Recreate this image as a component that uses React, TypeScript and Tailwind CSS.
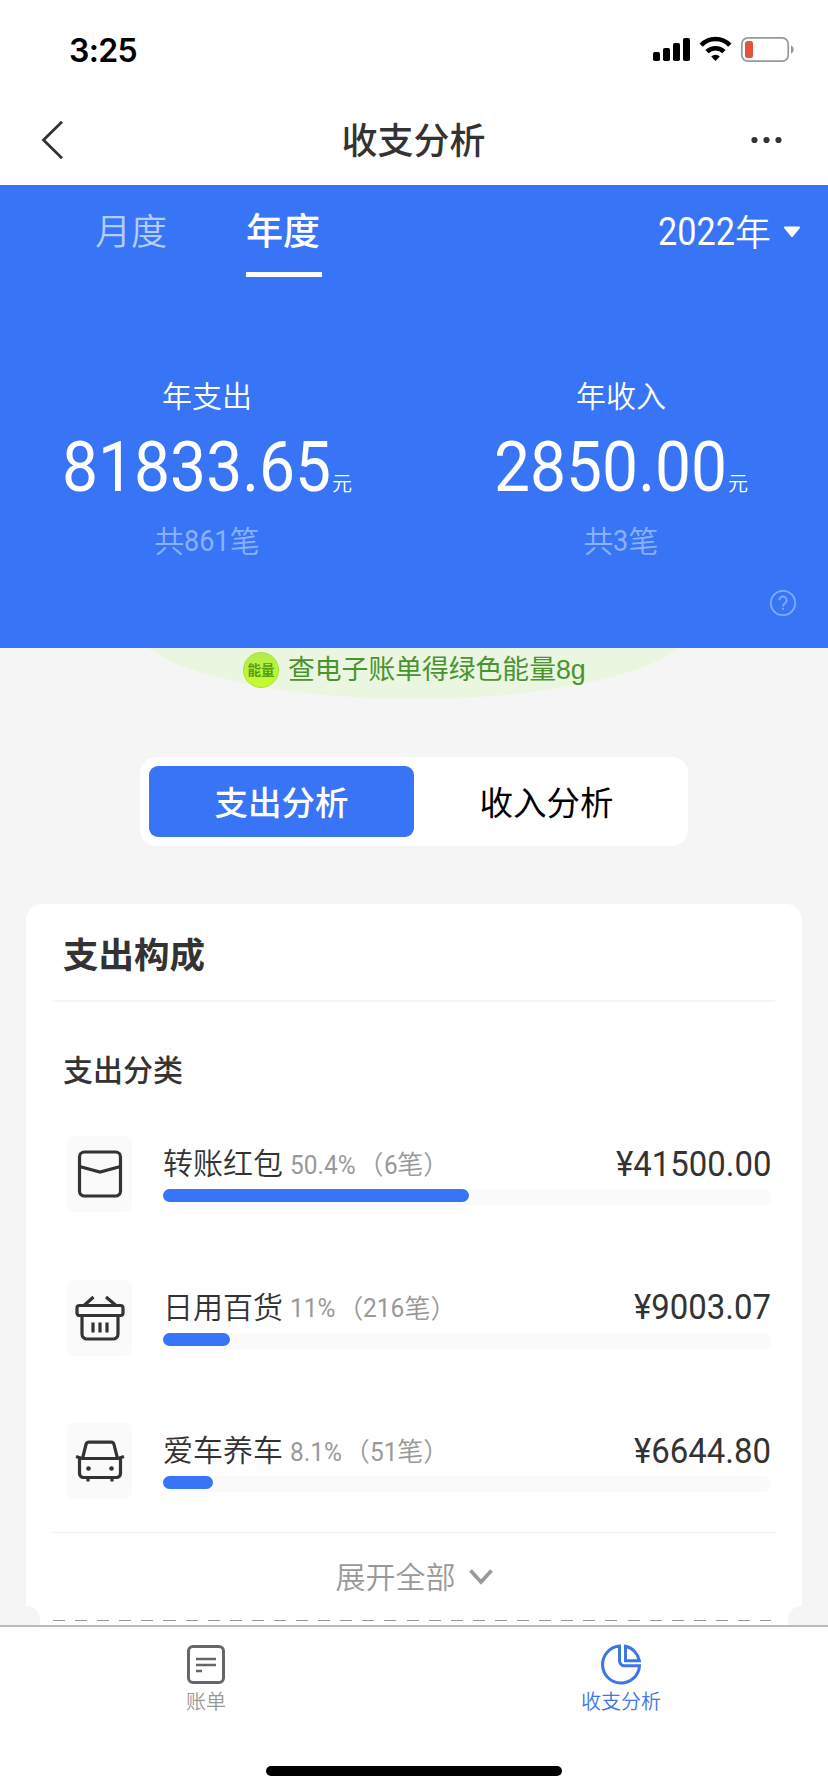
import type { ReactNode } from "react";

interface Category {
  name: string;
  percent: string;
  count: string;
  amount: string;
  barWidth: number;
  icon: ReactNode;
}

const CATEGORIES: Category[] = [
  {
    name: "转账红包",
    percent: "50.4%",
    count: "6",
    amount: "¥41500.00",
    barWidth: 306,
    icon: <EnvelopeIcon />,
  },
  {
    name: "日用百货",
    percent: "11%",
    count: "216",
    amount: "¥9003.07",
    barWidth: 67,
    icon: <BasketIcon />,
  },
  {
    name: "爱车养车",
    percent: "8.1%",
    count: "51",
    amount: "¥6644.80",
    barWidth: 50,
    icon: <CarIcon />,
  },
];

// Roboto advance widths in em
const ADVANCE: Record<string, number> = { ".": 0.263, "%": 0.733, "¥": 0.525 };
const DIGIT_ADVANCE = 0.5615;

// Numbers are set slightly condensed, the box takes the condensed width.
function Digits({
  value,
  scale = 0.94,
  className = "",
}: {
  value: string;
  scale?: number;
  className?: string;
}) {
  const em = [...value].reduce((sum, c) => sum + (ADVANCE[c] ?? DIGIT_ADVANCE), 0);
  return (
    <span
      className={`inline-block font-[Roboto,sans-serif] font-normal whitespace-nowrap ${className}`}
      style={{ width: `${em * scale}em` }}
    >
      <span
        className="inline-block origin-left"
        style={{ transform: `scaleX(${scale})` }}
      >
        {value}
      </span>
    </span>
  );
}

export default function App() {
  return (
    <div className="flex h-[1792px] w-[828px] flex-col overflow-hidden bg-[#f5f5f5] font-['Noto_Sans_CJK_SC',sans-serif] font-[350] text-[#333]">
      <StatusBar />
      <NavBar />
      <Summary />
      <main className="flex min-h-0 flex-1 flex-col overflow-hidden">
        <EnergyBanner />
        <div className="mx-auto mt-[58px] flex h-[89px] w-[548px] shrink-0 rounded-[16px] bg-white px-[9px] py-[9px] text-[33.5px]">
          <div className="flex w-[265px] items-center justify-center rounded-[9px] bg-[#3875f6] font-medium text-white">
            支出分析
          </div>
          <div className="flex flex-1 items-center justify-center font-normal text-black">
            收入分析
          </div>
        </div>
        <ExpenseCard />
      </main>
      <TabBar />
    </div>
  );
}

function StatusBar() {
  return (
    <div className="flex h-[95px] shrink-0 items-center justify-between bg-white pt-[4px] pr-[33px] pl-[69px]">
      <span className="pt-[2px] font-[Inter,sans-serif] text-[32px] leading-none font-semibold tracking-[-0.7px] text-black">
        3:25
      </span>
      <svg width="142" height="27" viewBox="653 36 142 27">
        <rect x="653" y="52" width="7" height="9" rx="1.8" />
        <rect x="663" y="48" width="7" height="13" rx="1.8" />
        <rect x="673" y="43" width="7" height="18" rx="1.8" />
        <rect x="683" y="38" width="7" height="23" rx="1.8" />
        <g fill="none" stroke="#000" strokeWidth="4.6">
          <path d="M701.2 45.2a19.6 19.6 0 0 1 28.6 0" />
          <path d="M707 51.6a12.3 12.3 0 0 1 17 0" />
        </g>
        <path d="M715.5 61l-4.3-4.4a6.2 6.2 0 0 1 8.6 0z" />
        <rect
          x="741.8"
          y="37.8"
          width="46.4"
          height="23.4"
          rx="6"
          fill="none"
          stroke="#999"
          strokeWidth="1.7"
        />
        <rect x="745" y="41" width="8" height="17" rx="2.5" fill="#e74f3d" />
        <path d="M791 45.3a4.6 4.6 0 0 1 0 8.4z" fill="#999" />
      </svg>
    </div>
  );
}

function NavBar() {
  return (
    <header className="flex h-[90px] shrink-0 items-center justify-between bg-white pr-[46px] pl-[40px]">
      <svg width="36" height="38" viewBox="0 0 36 38" fill="none">
        <path d="M22 .8L3.500 19l18.500 18.200" stroke="#333" strokeWidth="2.8" />
      </svg>
      <h1 className="pb-[4px] text-[36px] font-medium">收支分析</h1>
      <svg width="31" height="8" viewBox="0 0 31 8" fill="#333">
        <circle cx="3.500" cy="4" r="3.1" />
        <circle cx="15.500" cy="4" r="3.1" />
        <circle cx="27.500" cy="4" r="3.1" />
      </svg>
    </header>
  );
}

function Summary() {
  return (
    <section className="flex h-[463px] shrink-0 flex-col bg-[#3875f6] text-white">
      <div className="flex h-[92px] justify-between pr-[27px] pl-[95px]">
        <div className="flex">
          <span className="flex h-[87px] items-center text-[36px] text-[#b3ccfc]">
            月度
          </span>
          <div className="ml-[79px] flex w-[76px] flex-col border-b-[5px] border-white">
            <span className="flex h-[87px] items-center pt-[2px] text-[37px] leading-none font-medium">
              年度
            </span>
          </div>
        </div>
        <div className="flex h-[92px] items-center">
          <Digits value="2022" scale={0.9} className="pt-[3px] text-[38px]" />
          <span className="pb-[3px] text-[36px]">年</span>
          <svg className="mt-px ml-[12px]" width="18" height="12" viewBox="0 0 18 12">
            <path
              d="M2 1.500h14L9 10z"
              fill="#fff"
              stroke="#fff"
              strokeWidth="2"
              strokeLinejoin="round"
            />
          </svg>
        </div>
      </div>

      <div className="mt-[92px] grid grid-cols-2">
        <SummaryItem label="年支出" value="81833.65" count="861" />
        <SummaryItem label="年收入" value="2850.00" count="3" />
      </div>

      <svg
        className="mt-auto mr-[31px] mb-[31px] self-end"
        width="28"
        height="28"
        viewBox="0 0 28 28"
        fill="none"
        stroke="#83abfa"
        strokeWidth="1.800"
      >
        <circle cx="14" cy="14" r="12.2" />
        <path d="M10.300 11.300a3.700 3.700 0 1 1 5.800 3c-1.500 1-2.100 1.600-2.100 3.200" />
        <circle cx="14" cy="19.800" r="1.100" fill="#83abfa" stroke="none" />
      </svg>
    </section>
  );
}

function SummaryItem({
  label,
  value,
  count,
}: {
  label: string;
  value: string;
  count: string;
}) {
  return (
    <div className="flex flex-col items-center">
      <span className="flex h-[50px] items-center text-[30px]">{label}</span>
      <div className="mt-[3px] flex h-[90px] items-baseline justify-center">
        <Digits
          value={value}
          scale={0.916}
          className="text-[70px] leading-[90px]"
        />
        <span className="ml-px text-[20px] leading-none">元</span>
      </div>
      <span className="mt-[2px] flex h-[50px] items-center text-[30px] text-[#8bb0fb]">
        共
        <Digits value={count} scale={0.9} className="pt-[3px]" />
        笔
      </span>
    </div>
  );
}

function EnergyBanner() {
  return (
    <div className="relative h-[51px] shrink-0 overflow-hidden">
      <div className="absolute bottom-0 left-[134px] h-[150px] w-[560px] rounded-[50%] bg-[#ebf6e0]" />
      <div className="relative flex h-[43px] items-center pl-[243px]">
        <span className="flex h-[36px] w-[36px] items-center justify-center rounded-full border border-[#a4e52c] bg-linear-to-b from-[#b0ec4a] to-[#c9fa2b] text-[13.500px] leading-none font-bold text-[#55a012]">
          能量
        </span>
        <span className="ml-[9px] pt-[2px] font-['Liberation_Sans','Noto_Sans_CJK_SC',sans-serif] text-[26.800px] font-normal text-[#4a9430]">
          查电子账单得绿色能量8g
        </span>
      </div>
    </div>
  );
}

function ExpenseCard() {
  return (
    <section className="relative mx-[26px] mt-[58px] shrink-0 rounded-t-[16px] bg-white">
      <h2 className="flex h-[96px] items-center pt-px pl-[37px] text-[35.500px] font-bold">
        支出构成
      </h2>
      <div className="mx-[27px] h-[2px] bg-[#f5f5f5]" />
      <h3 className="flex h-[134px] items-center pb-[2px] pl-[37px] text-[30px] font-medium">
        支出分类
      </h3>

      <div className="flex flex-col gap-[67.500px] pr-[31px] pl-[41px]">
        {CATEGORIES.map((category) => (
          <CategoryRow key={category.name} category={category} />
        ))}
      </div>

      <div className="mx-[27px] mt-[33px] h-px bg-[#eee]" />
      <div className="flex h-[87px] items-center justify-center pb-[2px] text-[30px] text-[#999]">
        展开全部
        <svg
          className="mt-[2px] ml-[13px]"
          width="24"
          height="18"
          viewBox="0 0 24 18"
          fill="none"
        >
          <path d="M1.500 2.500L12 14 22.500 2.500" stroke="#999" strokeWidth="3.600" />
        </svg>
      </div>

      {/* ticket-style tear line with a notch on each side */}
      <div className="mx-[27px] h-[20px]">
        <div className="h-px w-[718px] bg-[repeating-linear-gradient(to_right,#999_0,#999_12px,transparent_12px,transparent_22.100px)]" />
      </div>
      <div className="absolute bottom-[7px] -left-[13px] h-[27px] w-[27px] rounded-full bg-[#f5f5f5]" />
      <div className="absolute -right-[13px] bottom-[7px] h-[27px] w-[27px] rounded-full bg-[#f5f5f5]" />
    </section>
  );
}

function CategoryRow({ category }: { category: Category }) {
  return (
    <div className="flex h-[76px] gap-[31px]">
      <div className="flex w-[65px] items-center justify-center rounded-[7px] bg-[#fafafa]">
        {category.icon}
      </div>
      <div className="flex-1">
        <div className="flex h-[53px] items-center">
          <span className="pb-[2px] text-[30px]">{category.name}</span>
          <span className="ml-[7px] flex items-center text-[26px] text-[#999]">
            <Digits value={category.percent} className="pt-[5px]" />
            <span className="ml-[2px]">（</span>
            <Digits value={category.count} className="pt-[5px]" />笔）
          </span>
          <Digits
            value={category.amount}
            scale={0.94}
            className="ml-auto pt-[5px] text-[35px]"
          />
        </div>
        <div className="h-[16px] rounded-[7px] bg-[#fafafa]">
          <div
            className="h-[13px] rounded-full bg-[#3875f6]"
            style={{ width: category.barWidth }}
          />
        </div>
      </div>
    </div>
  );
}

function TabBar() {
  return (
    <footer className="flex h-[167px] shrink-0 flex-col justify-between border-t-2 border-[#bbb] bg-white">
      <nav className="grid grid-cols-2 text-[20px]">
        <div className="flex flex-col items-center pt-[17px] pr-[2px] text-[#999]">
          <svg width="40" height="42" viewBox="0 0 40 42" fill="none" stroke="#666">
            <rect x="2.500" y="2.500" width="35" height="36" rx="4.500" strokeWidth="3" />
            <path d="M10 15h20M10 21h20M10 27h6" strokeWidth="2.600" />
          </svg>
          <span className="leading-[30px]">账单</span>
        </div>
        <div className="flex flex-col items-center pt-[17px] text-[#3d76e8]">
          <svg width="40" height="42" viewBox="0 0 40 42" fill="none" stroke="#3d76e8" strokeWidth="3">
            <path d="M18.500 2.100A18.500 18.500 0 1 0 38.500 21.800H23.500a5 5 0 0 1-5-5z" />
            <path d="M24.500 2.300V16.700H38.400A18.300 18.300 0 0 0 24.500 2.300z" />
          </svg>
          <span className="leading-[30px]">收支分析</span>
        </div>
      </nav>
      <div className="mx-auto mb-[16px] h-[10px] w-[296px] rounded-full bg-black" />
    </footer>
  );
}

function EnvelopeIcon() {
  return (
    <svg width="50" height="50" viewBox="0 0 50 50" fill="none" stroke="#333" strokeWidth="3.200">
      <rect x="4.500" y="3" width="41" height="44" rx="5" />
      <path d="M4.500 17.500L25 23 45.500 17.500" />
    </svg>
  );
}

function BasketIcon() {
  return (
    <svg width="50" height="50" viewBox="0 0 50 50" fill="none" stroke="#333" strokeWidth="3.200">
      <path d="M9 12.500L18.500 4M41 12.500L31 4" />
      <rect x="2" y="12.500" width="46" height="10" rx="2.500" />
      <path d="M7 22.500V41a5 5 0 0 0 5 5H38a5 5 0 0 0 5-5V22.500" />
      <path d="M18 29.500v10M25 29.500v10M32 29.500v10" />
    </svg>
  );
}

function CarIcon() {
  return (
    <svg width="50" height="50" viewBox="0 0 50 50" fill="none" stroke="#333" strokeWidth="3.200">
      <path d="M7.500 22.500L11 8.500a3 3 0 0 1 3-2.300H36a3 3 0 0 1 3 2.300l3.500 14" />
      <path d="M1 20.500L7 22.500H43l6-2" />
      <path d="M4.500 21.500V37.500a4 4 0 0 0 4 4H41.500a4 4 0 0 0 4-4V21.500" />
      <path d="M13 41.500v4M37 41.500v4" />
      <circle cx="13.500" cy="32.500" r="2.300" fill="#333" stroke="none" />
      <circle cx="36.500" cy="32.500" r="2.300" fill="#333" stroke="none" />
    </svg>
  );
}
